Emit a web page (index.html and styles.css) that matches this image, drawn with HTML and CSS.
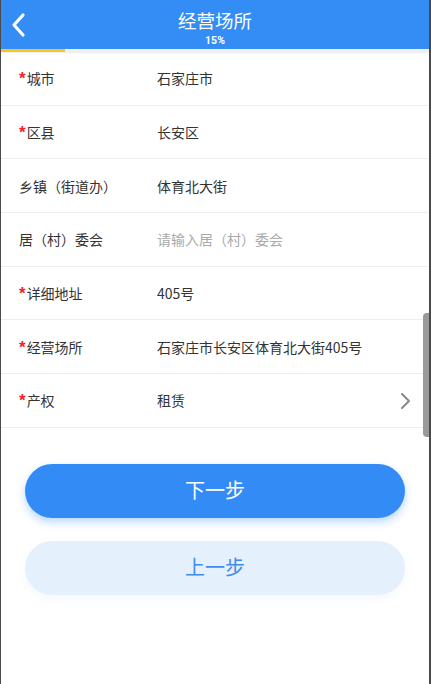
FILE: index.html
```html
<!DOCTYPE html>
<html lang="zh">
<head>
<meta charset="utf-8">
<link rel="stylesheet" href="styles.css">
</head>
<body>
<div class="frame">
  <header class="topbar">
    <svg class="back" width="16" height="26" viewBox="0 0 16 26"><path d="M13 3 L4 13 L13 23" fill="none" stroke="#fff" stroke-width="3.2" stroke-linecap="round" stroke-linejoin="round"/></svg>
    <div class="title">经营场所</div>
    <div class="pct">15%</div>
  </header>
  <div class="progress"><div class="progress-fill" style="width:15%"></div></div>
  <div class="form">
    <div class="row"><div class="label"><span class="req">*</span>城市</div><div class="value">石家庄市</div></div>
    <div class="row"><div class="label"><span class="req">*</span>区县</div><div class="value">长安区</div></div>
    <div class="row"><div class="label">乡镇（街道办）</div><div class="value">体育北大街</div></div>
    <div class="row"><div class="label">居（村）委会</div><div class="value placeholder">请输入居（村）委会</div></div>
    <div class="row"><div class="label"><span class="req">*</span>详细地址</div><div class="value">405号</div></div>
    <div class="row"><div class="label"><span class="req">*</span>经营场所</div><div class="value">石家庄市长安区体育北大街405号</div></div>
    <div class="row"><div class="label"><span class="req">*</span>产权</div><div class="value">租赁</div>
      <svg class="chev" width="12" height="18" viewBox="0 0 12 18"><path d="M3 2 L10 9 L3 16" fill="none" stroke="#8a8a8a" stroke-width="2" stroke-linecap="round" stroke-linejoin="round"/></svg>
    </div>
  </div>
  <div class="actions">
    <button class="btn primary">下一步</button>
    <button class="btn secondary">上一步</button>
  </div>
  <div class="scrollbar"></div>
</div>
</body>
</html>
```
FILE: styles.css
```css
* { box-sizing: border-box; }
html, body { margin: 0; padding: 0; }
body {
  width: 431px;
  height: 684px;
  overflow: hidden;
  background: #fff;
  font-family: "Noto Sans CJK SC", "Noto Sans", sans-serif;
}
.frame {
  position: relative;
  width: 431px;
  height: 684px;
  border-left: 1px solid #4a4a4a;
  border-right: 2px solid #4a4a4a;
  background: #fff;
}
.topbar {
  position: relative;
  height: 49px;
  background: #348cf5;
  color: #fff;
  display: flex;
  flex-direction: column;
  align-items: center;
}
.back {
  position: absolute;
  left: 9px;
  top: 12px;
}
.title {
  font-size: 18.5px;
  line-height: 20px;
  margin-top: 10px;
}
.pct {
  font-family: Roboto, "Noto Sans", sans-serif;
  font-weight: 700;
  font-size: 10.5px;
  line-height: 12px;
  margin-top: 5px;
}
.progress {
  height: 3px;
  background: #eef0f3;
  box-shadow: 0 1px 2px rgba(0,0,0,0.08);
}
.progress-fill {
  height: 3px;
  background: #f6c71a;
}
.row {
  position: relative;
  height: 53.7px;
  border-bottom: 1px solid #eeeeee;
  display: flex;
  align-items: center;
  font-size: 14px;
  color: #333;
}
.label {
  width: 156px;
  padding-left: 18px;
  display: flex;
  align-items: center;
}
.req {
  color: #f0222a;
  font-family: "Liberation Sans", sans-serif;
  font-weight: 700;
  font-size: 17px;
  line-height: 14px;
  margin-top: 2px;
  margin-right: 1px;
}
.value { flex: 1; }
.placeholder { color: #aaaaaa; }
.chev {
  position: absolute;
  right: 18px;
  top: 18px;
}
.actions {
  display: flex;
  flex-direction: column;
  gap: 23px;
  padding: 36px 24px 0 24px;
}
.btn {
  height: 54px;
  border: none;
  border-radius: 27px;
  font-family: "Noto Sans CJK SC", sans-serif;
  font-size: 20px;
  line-height: 20px;
  padding-bottom: 3px;
  width: 100%;
}
.primary {
  background: #338cf5;
  color: #fff;
  box-shadow: 0 4px 8px rgba(51,140,245,0.35);
}
.secondary {
  background: #e5f0fd;
  color: #3f8cec;
  box-shadow: 0 4px 8px rgba(51,140,245,0.06);
}
.scrollbar {
  position: absolute;
  right: 0;
  top: 313px;
  width: 6px;
  height: 124px;
  background: #9a9a9a;
  border-radius: 4px 0 0 4px;
}
```
